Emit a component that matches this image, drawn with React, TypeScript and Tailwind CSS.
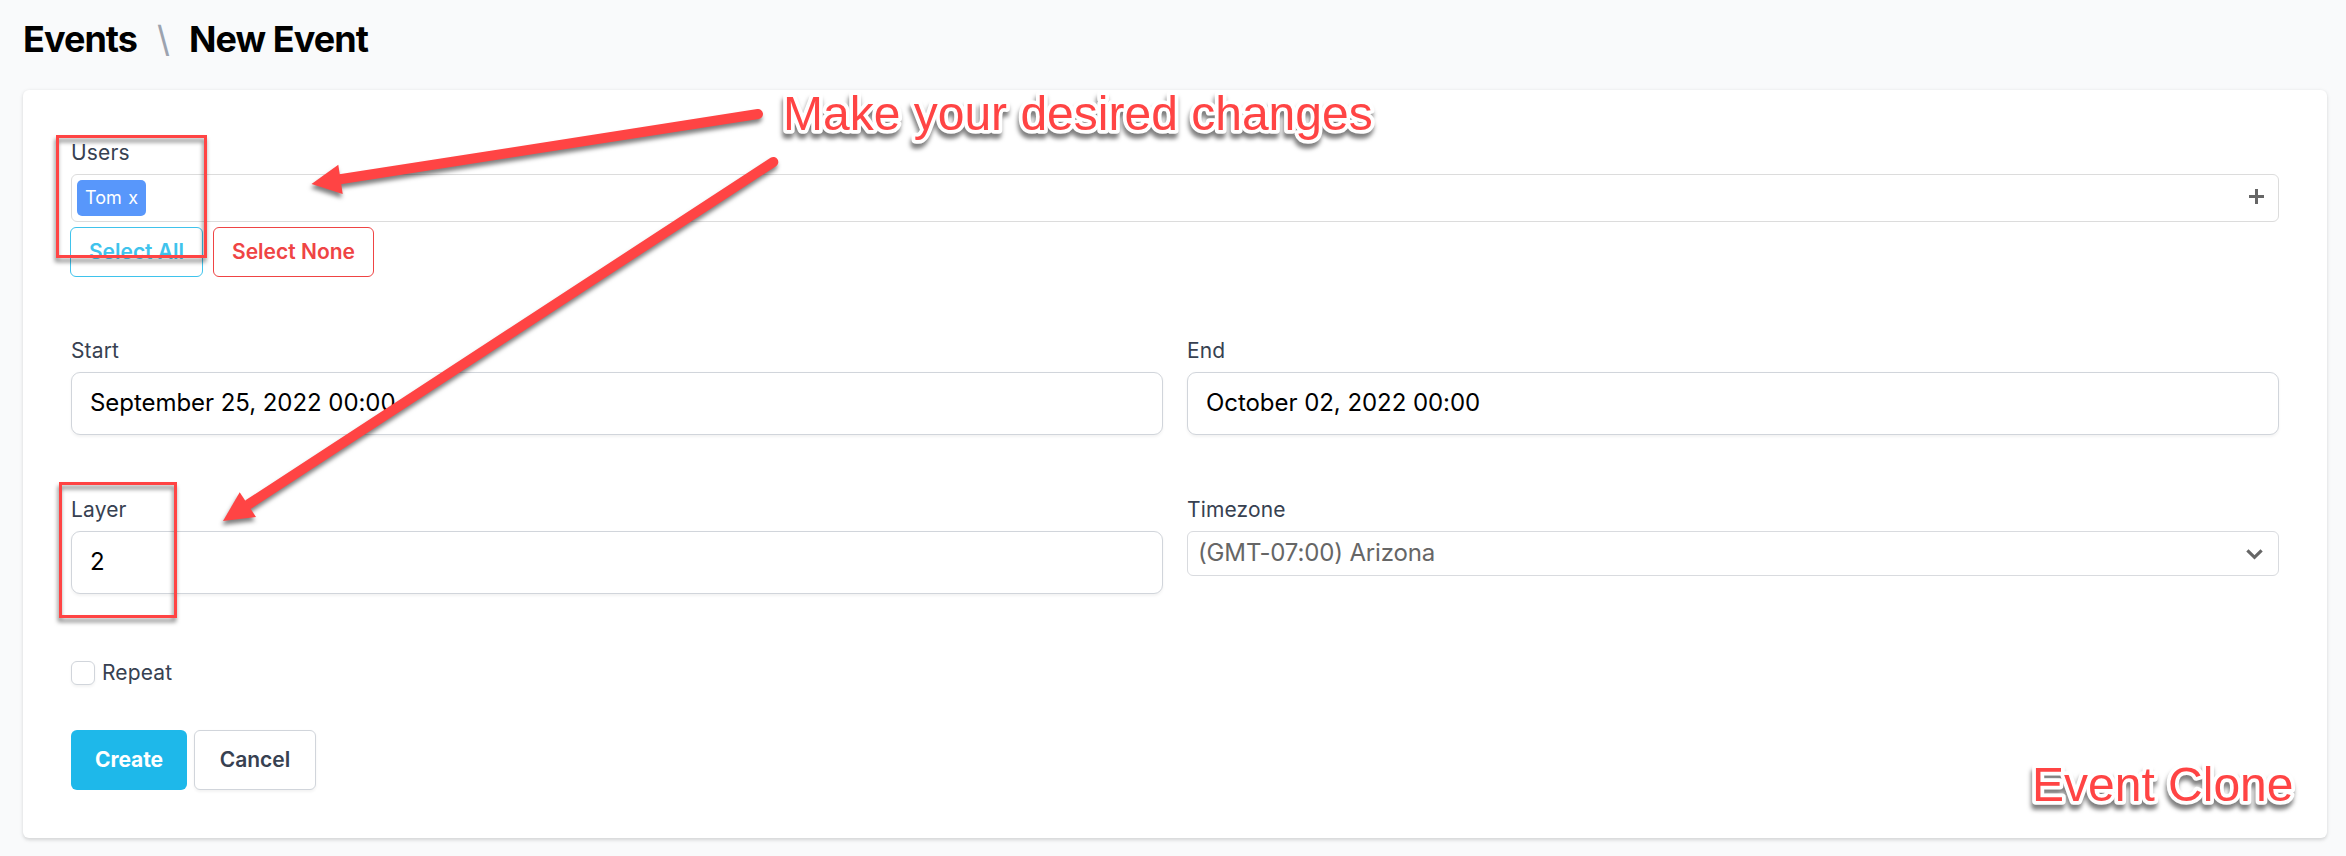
import React from "react";

function Label({ children }: { children: React.ReactNode }) {
  return <label className="mb-1.5 block text-[21px] leading-[30px] tracking-[0.15px] text-[#374151]">{children}</label>;
}

function Field({ label, value }: { label: string; value: string }) {
  return (
    <div>
      <Label>{label}</Label>
      <div className="flex h-[63px] items-center rounded-[9px] border border-[#d1d5db] bg-white px-[18px] pb-px text-2xl tracking-[-0.05px] text-black shadow-[0_1.5px_3px_rgba(0,0,0,0.05)]">
        {value}
      </div>
    </div>
  );
}

function Callout({ x, y, children }: { x: number; y: number; children: React.ReactNode }) {
  return (
    <text
      x={x}
      y={y}
      stroke="#ffffff"
      strokeWidth="7.5"
      strokeLinejoin="round"
      className="font-['Liberation_Sans',Arial,sans-serif] text-5xl drop-shadow-[-1px_5px_2px_rgba(0,0,0,0.5)] [paint-order:stroke_fill]"
    >
      {children}
    </text>
  );
}

function Annotations() {
  return (
    <svg className="pointer-events-none absolute left-0 top-0" width="2346" height="856" fill="#ff4444">
      <g className="drop-shadow-[-1px_4px_2px_rgba(0,0,0,0.5)]">
        <rect x="57.5" y="136.5" width="148" height="120" fill="none" stroke="#ff4444" strokeWidth="3" />
        <rect x="60.5" y="483.5" width="115" height="133" fill="none" stroke="#ff4444" strokeWidth="3" />
        <path d="M340 179.3L758 114" stroke="#ff4444" strokeWidth="10" strokeLinecap="round" />
        <path d="M311.5 184L338.3 164.7L342.7 194Z" />
        <path d="M249 504L773.3 162" stroke="#ff4444" strokeWidth="10" strokeLinecap="round" />
        <path d="M223 521L239.7 492.3L256 517Z" />
      </g>
      <Callout x={783} y={130}>Make your desired changes</Callout>
      <Callout x={2032} y={801}>Event Clone</Callout>
    </svg>
  );
}

export default function App() {
  return (
    <div className="relative h-[856px] w-[2346px] overflow-hidden bg-[#f9fafb] px-[23px] pr-[19px] font-['Inter',sans-serif]">
      <h1 className="flex h-[90px] items-start pt-[15px] text-4xl leading-[48px] font-bold tracking-[-0.95px] text-black">
        <span>Events</span>
        <span className="mx-[20px] font-normal text-[#9ca3af]">\</span>
        <span>New Event</span>
      </h1>

      <main className="h-[748px] rounded-md bg-white p-12 shadow-[0_1.5px_4.5px_rgba(0,0,0,0.1),0_1.5px_3px_rgba(0,0,0,0.06)]">
        <section className="h-[198px]">
          <Label>Users</Label>
          <div className="flex h-12 items-center justify-between rounded-md border border-[#dcdcdc] pr-[14px] pl-[5px]">
            <span className="flex h-9 w-[69px] items-center justify-between rounded-[5px] bg-[#5897fb] px-2 text-lg text-white">
              <span>Tom</span>
              <span>x</span>
            </span>
            <svg width="15" height="15" className="mb-[3px]" fill="#666666">
              <path d="M6 0h3v6h6v3H9v6H6V9H0V6h6z" />
            </svg>
          </div>
          <div className="-ml-px mt-[5px] flex gap-[10px] text-[21px] font-semibold">
            <button className="h-[50px] w-[133px] rounded-md border border-[#3fc3ec] text-[#3fc3ec]">Select All</button>
            <button className="h-[50px] w-[161px] rounded-md border border-[#ef4444] text-[#ef4444]">Select None</button>
          </div>
        </section>

        <section className="grid grid-cols-2 gap-x-6 gap-y-[60px]">
          <Field label="Start" value="September 25, 2022 00:00" />
          <Field label="End" value="October 02, 2022 00:00" />
          <Field label="Layer" value="2" />
          <div>
            <Label>Timezone</Label>
            <div className="flex h-[45px] items-center justify-between rounded-md border border-[#d9dbdf] pr-[15px] pb-px pl-[10px] text-2xl tracking-[-0.15px] text-[#666666]">
              <span>(GMT-07:00) Arizona</span>
              <svg width="17" height="11" className="mt-[2px]" fill="none" stroke="#666666" strokeWidth="3.2">
                <path d="M1.4 1.4L8.5 8.3L15.6 1.4" />
              </svg>
            </div>
          </div>
        </section>

        <div className="mt-16 flex h-[30px] items-center gap-[7px] text-[21px] leading-[30px] tracking-[0.15px] text-[#374151]">
          <span className="size-6 rounded-md border border-[#d1d5db] bg-white shadow-[0_1.5px_3px_rgba(0,0,0,0.05)]" />
          <span>Repeat</span>
        </div>

        <div className="mt-[42px] flex gap-[7px] text-[21px]">
          <button className="h-[60px] w-[116px] rounded-md bg-[#1eb8ea] font-bold tracking-[-0.1px] text-white">Create</button>
          <button className="h-[60px] w-[122px] rounded-md border border-[#d1d5db] bg-white font-semibold text-[#374151] shadow-[0_1.5px_3px_rgba(0,0,0,0.05)]">
            Cancel
          </button>
        </div>
      </main>

      <Annotations />
    </div>
  );
}
